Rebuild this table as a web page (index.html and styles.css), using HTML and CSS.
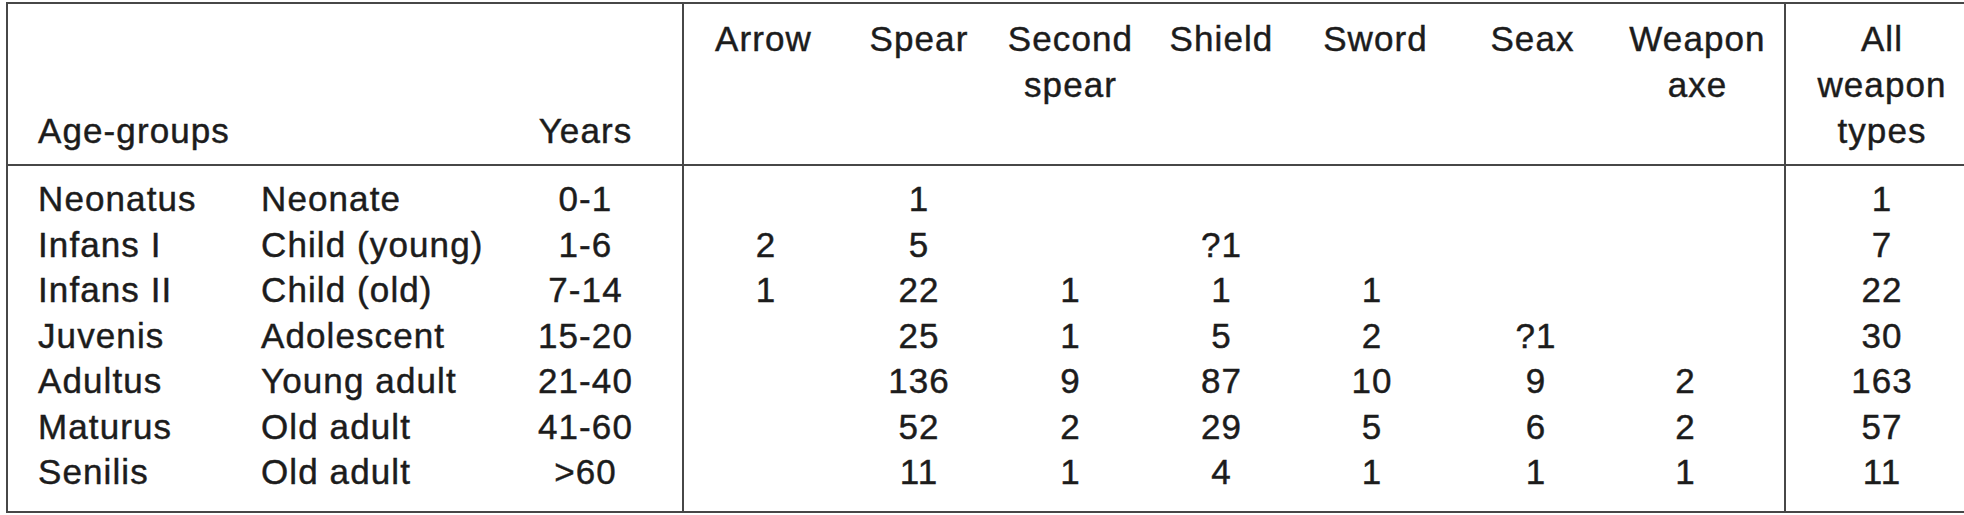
FILE: index.html
```html
<!DOCTYPE html>
<html lang="en">
<head>
<meta charset="utf-8">
<title>Weapon types by age-group</title>
<link rel="stylesheet" href="styles.css">
</head>
<body>
<div class="table">
  <div class="head">
    <div class="h-age">Age-groups</div>
    <div class="h-years">Years</div>
    <div class="h-w c-arrow">Arrow</div>
    <div class="h-w c-spear">Spear</div>
    <div class="h-w c-second">Second<br>spear</div>
    <div class="h-w c-shield">Shield</div>
    <div class="h-w c-sword">Sword</div>
    <div class="h-w c-seax">Seax</div>
    <div class="h-w c-axe">Weapon<br>axe</div>
    <div class="h-w c-all">All<br>weapon<br>types</div>
  </div>
  <div class="body">
    <div class="row">
      <div class="c-latin">Neonatus</div><div class="c-eng">Neonate</div><div class="c-years">0-1</div>
      <div class="c-arrow"></div><div class="c-spear">1</div><div class="c-second"></div><div class="c-shield"></div><div class="c-sword"></div><div class="c-seax"></div><div class="c-axe"></div><div class="c-all">1</div>
    </div>
    <div class="row">
      <div class="c-latin">Infans I</div><div class="c-eng">Child (young)</div><div class="c-years">1-6</div>
      <div class="c-arrow">2</div><div class="c-spear">5</div><div class="c-second"></div><div class="c-shield">?1</div><div class="c-sword"></div><div class="c-seax"></div><div class="c-axe"></div><div class="c-all">7</div>
    </div>
    <div class="row">
      <div class="c-latin">Infans II</div><div class="c-eng">Child (old)</div><div class="c-years">7-14</div>
      <div class="c-arrow">1</div><div class="c-spear">22</div><div class="c-second">1</div><div class="c-shield">1</div><div class="c-sword">1</div><div class="c-seax"></div><div class="c-axe"></div><div class="c-all">22</div>
    </div>
    <div class="row">
      <div class="c-latin">Juvenis</div><div class="c-eng">Adolescent</div><div class="c-years">15-20</div>
      <div class="c-arrow"></div><div class="c-spear">25</div><div class="c-second">1</div><div class="c-shield">5</div><div class="c-sword">2</div><div class="c-seax">?1</div><div class="c-axe"></div><div class="c-all">30</div>
    </div>
    <div class="row">
      <div class="c-latin">Adultus</div><div class="c-eng">Young adult</div><div class="c-years">21-40</div>
      <div class="c-arrow"></div><div class="c-spear">136</div><div class="c-second">9</div><div class="c-shield">87</div><div class="c-sword">10</div><div class="c-seax">9</div><div class="c-axe">2</div><div class="c-all">163</div>
    </div>
    <div class="row">
      <div class="c-latin">Maturus</div><div class="c-eng">Old adult</div><div class="c-years">41-60</div>
      <div class="c-arrow"></div><div class="c-spear">52</div><div class="c-second">2</div><div class="c-shield">29</div><div class="c-sword">5</div><div class="c-seax">6</div><div class="c-axe">2</div><div class="c-all">57</div>
    </div>
    <div class="row">
      <div class="c-latin">Senilis</div><div class="c-eng">Old adult</div><div class="c-years">&gt;60</div>
      <div class="c-arrow"></div><div class="c-spear">11</div><div class="c-second">1</div><div class="c-shield">4</div><div class="c-sword">1</div><div class="c-seax">1</div><div class="c-axe">1</div><div class="c-all">11</div>
    </div>
  </div>
</div>
</body>
</html>
```

FILE: styles.css
```css
html, body {
  margin: 0;
  padding: 0;
  background: #ffffff;
  overflow: hidden;
}

body {
  font-family: "Liberation Sans", Arial, Helvetica, sans-serif;
  font-size: 35px;
  letter-spacing: 1.1px;
  color: #1c1c1c;
  -webkit-text-stroke: 0.45px #1c1c1c;
}

.table {
  margin: 2px 0 0 6px;
  width: 1972px;
  border-top: 2px solid #474747;
  border-left: 2px solid #474747;
  border-bottom: 2px solid #474747;
}

.head,
.body {
  display: grid;
  grid-template-columns: 253px 228px 195px 159px 152px 151px 151px 157px 157px 175px 192px;
}

.head {
  border-bottom: 2px solid #474747;
  line-height: 46px;
}

.head > div {
  padding: 12px 0 10px;
  text-align: center;
}

.head .h-age {
  grid-column: 1 / span 2;
  padding-left: 30px;
  text-align: left;
  display: flex;
  flex-direction: column;
  justify-content: flex-end;
}

.head .h-years {
  display: flex;
  flex-direction: column;
  justify-content: flex-end;
  border-right: 2px solid #474747;
}

.body {
  line-height: 45.5px;
}

.row {
  display: contents;
}

.row > div {
  text-align: center;
  min-height: 45.5px;
}

.row:first-child > div {
  padding-top: 10px;
}

.row:last-child > div {
  padding-bottom: 16px;
}

.row > .c-latin {
  text-align: left;
  padding-left: 30px;
}

.row > .c-eng {
  text-align: left;
}

.c-years {
  border-right: 2px solid #474747;
}

.c-arrow {
  padding-left: 5px;
}

.c-sword {
  padding-right: 7px;
}

.c-seax {
  padding-left: 7px;
}

.c-axe {
  padding-right: 24px;
  border-right: 2px solid #474747;
}
```
